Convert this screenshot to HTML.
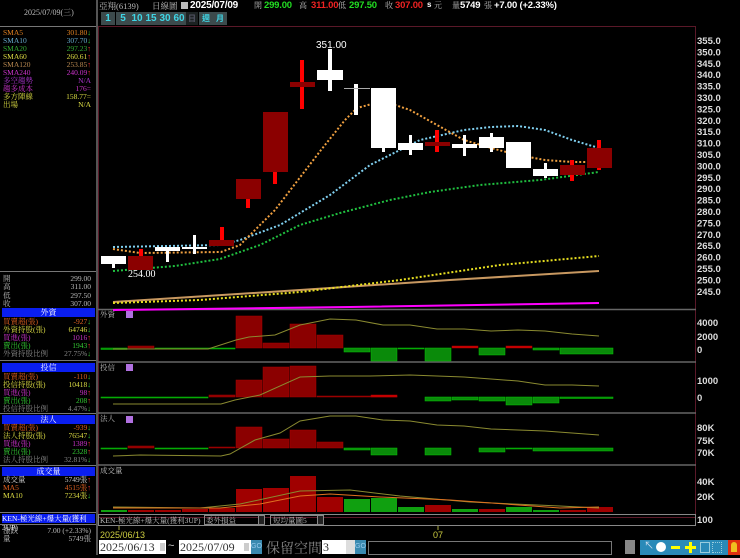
<!DOCTYPE html>
<html><head><meta charset="utf-8"><style>
body{margin:0;width:740px;height:555px;background:#000;overflow:hidden;position:relative;font-family:"Liberation Sans","Noto Sans CJK TC",sans-serif}
.a{position:absolute;white-space:nowrap}
.s{font-family:"Liberation Serif","Noto Serif CJK SC",serif;font-size:8px;line-height:8px}
.b{font-weight:bold;font-size:9.5px;letter-spacing:-0.2px}
.btn{position:absolute;top:12px;height:13px;width:14px;background:#3c4a4c;color:#3fd6e6;font-size:10px;text-align:center;line-height:13px;font-weight:bold}
.hd{position:absolute;left:2px;width:93px;height:9px;background:#0a1ef0;color:#fff;font-size:8px;line-height:9px;text-align:center;font-family:"Liberation Serif","Noto Serif CJK SC",serif}
.r{position:absolute;left:3px;width:88px;font-size:7.5px;line-height:8px;height:8px;overflow:visible;font-family:"Liberation Serif","Noto Serif CJK SC",serif}
.r span{float:right}
.inp{position:absolute;background:#fff;color:#333;font-size:12px;line-height:14px;height:14px;font-family:"Liberation Serif",serif}
</style></head><body>
<div class="a s" style="left:24px;top:9px;color:#bbb">2025/07/09(三)</div>
<div class="a" style="left:0;top:26px;width:96px;height:1px;background:#777"></div>
<div class="a" style="left:96px;top:0;width:2px;height:555px;background:#555"></div>
<div class="r" style="top:29px;color:#e08020">SMA5<span>301.80<b style="color:#3c3">↓</b></span></div>
<div class="r" style="top:37px;color:#6ac">SMA10<span>307.70<b style="color:#3c3">↓</b></span></div>
<div class="r" style="top:45px;color:#3a3">SMA20<span>297.23<b style="color:#e33">↑</b></span></div>
<div class="r" style="top:53px;color:#dd4">SMA60<span>260.61<b style="color:#e33">↑</b></span></div>
<div class="r" style="top:61px;color:#b88850">SMA120<span>253.85<b style="color:#e33">↑</b></span></div>
<div class="r" style="top:69px;color:#c3c">SMA240<span>240.09<b style="color:#e33">↑</b></span></div>
<div class="r" style="top:77px;color:#a3c">多空趨勢<span>N/A</span></div>
<div class="r" style="top:85px;color:#c3c">趨多成本<span>176=</span></div>
<div class="r" style="top:93px;color:#dd4">多方陣線<span>158.77=</span></div>
<div class="r" style="top:101px;color:#dd4">出場<span>N/A</span></div>
<div class="a" style="left:0;top:271px;width:96px;height:1px;background:#777"></div>
<div class="r" style="top:275px;color:#bbb">開<span>299.00</span></div>
<div class="r" style="top:283px;color:#bbb">高<span>311.00</span></div>
<div class="r" style="top:292px;color:#bbb">低<span>297.50</span></div>
<div class="r" style="top:300px;color:#bbb">收<span>307.00</span></div>
<div class="hd" style="top:308px">外資</div>
<div class="r" style="top:318px;color:#e06020">買賣超(張)<span>-927<b style="color:#3c3">↓</b></span></div>
<div class="r" style="top:326px;color:#dd4">外資持股(張)<span>64746<b style="color:#3c3">↓</b></span></div>
<div class="r" style="top:334px;color:#c3c">買進(張)<span>1016<b style="color:#e33">↑</b></span></div>
<div class="r" style="top:342px;color:#3c3">賣出(張)<span>1943<b style="color:#e33">↑</b></span></div>
<div class="r" style="top:350px;color:#888">外資持股比例<span>27.75%<b style="color:#3c3">↓</b></span></div>
<div class="a" style="left:0;top:360px;width:96px;height:1px;background:#777"></div>
<div class="hd" style="top:363px">投信</div>
<div class="r" style="top:373px;color:#e06020">買賣超(張)<span>-110<b style="color:#3c3">↓</b></span></div>
<div class="r" style="top:381px;color:#dd4">投信持股(張)<span>10418<b style="color:#3c3">↓</b></span></div>
<div class="r" style="top:389px;color:#c3c">買進(張)<span>98<b style="color:#e33">↑</b></span></div>
<div class="r" style="top:397px;color:#3c3">賣出(張)<span>208<b style="color:#e33">↑</b></span></div>
<div class="r" style="top:405px;color:#888">投信持股比例<span>4.47%<b style="color:#3c3">↓</b></span></div>
<div class="a" style="left:0;top:413px;width:96px;height:1px;background:#777"></div>
<div class="hd" style="top:415px">法人</div>
<div class="r" style="top:424px;color:#e06020">買賣超(張)<span>-939<b style="color:#3c3">↓</b></span></div>
<div class="r" style="top:432px;color:#dd4">法人持股(張)<span>76547<b style="color:#3c3">↓</b></span></div>
<div class="r" style="top:440px;color:#c3c">買進(張)<span>1389<b style="color:#e33">↑</b></span></div>
<div class="r" style="top:448px;color:#3c3">賣出(張)<span>2328<b style="color:#e33">↑</b></span></div>
<div class="r" style="top:456px;color:#888">法人持股比例<span>32.81%<b style="color:#3c3">↓</b></span></div>
<div class="a" style="left:0;top:465px;width:96px;height:1px;background:#777"></div>
<div class="hd" style="top:467px">成交量</div>
<div class="r" style="top:476px;color:#ccc">成交量<span>5749張<b style="color:#e33">↑</b></span></div>
<div class="r" style="top:484px;color:#e06020">MA5<span>4515張<b style="color:#e33">↑</b></span></div>
<div class="r" style="top:492px;color:#dd4">MA10<span>7234張<b style="color:#3c3">↓</b></span></div>
<div class="a" style="left:0;top:512px;width:96px;height:1px;background:#777"></div>
<div class="hd" style="top:514px;text-align:left;font-size:7.5px">KEN-極光線+爆大量(獲利3UP)</div>
<div class="a" style="left:0;top:524px;width:96px;height:1px;background:#777"></div>
<div class="r" style="top:527px;color:#bbb">漲跌<span>7.00 (+2.33%)</span></div>
<div class="r" style="top:535px;color:#bbb">量<span>5749張</span></div>

<div class="a s" style="left:99px;top:2px;color:#bbb;font-size:8.5px">亞翔(6139)</div>
<div class="a s" style="left:152px;top:2px;color:#bbb;font-size:8.5px">日線圖</div>
<div class="a" style="left:181px;top:2px;width:7px;height:7px;background:#bbb"></div>
<div class="a b" style="left:190px;top:0px;color:#fff;font-size:10px">2025/07/09</div>
<div class="a s" style="left:254px;top:2px;color:#bbb">開</div>
<div class="a b" style="left:264px;top:0;color:#2d2">299.00</div>
<div class="a s" style="left:299px;top:2px;color:#bbb">高</div>
<div class="a b" style="left:311px;top:0;color:#e22">311.00</div>
<div class="a s" style="left:338px;top:2px;color:#bbb">低</div>
<div class="a b" style="left:349px;top:0;color:#2d2">297.50</div>
<div class="a s" style="left:385px;top:2px;color:#bbb">收</div>
<div class="a b" style="left:395px;top:0;color:#e22">307.00</div>
<div class="a b" style="left:427px;top:0;color:#fff;font-size:8px">s</div>
<div class="a s" style="left:434px;top:2px;color:#bbb">元</div>
<div class="a s" style="left:452px;top:2px;color:#bbb">量</div>
<div class="a b" style="left:460px;top:0;color:#fff">5749</div>
<div class="a s" style="left:484px;top:2px;color:#bbb">張</div>
<div class="a b" style="left:494px;top:0;color:#fff">+7.00 (+2.33%)</div>
<div class="btn" style="left:101px">1</div><div class="btn" style="left:116px">5</div><div class="btn" style="left:130px">10</div><div class="btn" style="left:144px">15</div><div class="btn" style="left:158px">30</div><div class="btn" style="left:172px">60</div>
<div class="btn" style="left:186px;width:12px;background:#1c2222;color:#556;font-size:8px">日</div><div class="btn" style="left:199px;font-size:8px">週</div><div class="btn" style="left:213px;font-size:8px">月</div>

<svg class="a" style="left:0;top:0" width="740" height="555">
<rect x="98.5" y="26.5" width="597" height="491" fill="none" stroke="#5a1828" stroke-width="1"/>
<g stroke="#666" stroke-width="1.5"><line x1="98" y1="309.5" x2="696" y2="309.5"/><line x1="98" y1="362" x2="696" y2="362"/><line x1="98" y1="413" x2="696" y2="413"/><line x1="98" y1="465" x2="696" y2="465"/></g>
<rect x="98.5" y="514.5" width="597" height="11" fill="none" stroke="#888"/>
<g font-family="Liberation Sans" font-weight="bold" font-size="9.5" fill="#ddd">
<text x="697" y="44">355.0</text><text x="697" y="55.4">350.0</text><text x="697" y="66.8">345.0</text><text x="697" y="78.2">340.0</text><text x="697" y="89.6">335.0</text><text x="697" y="101">330.0</text><text x="697" y="112.4">325.0</text><text x="697" y="123.8">320.0</text><text x="697" y="135.2">315.0</text><text x="697" y="146.6">310.0</text><text x="697" y="158">305.0</text><text x="697" y="169.4">300.0</text><text x="697" y="180.8">295.0</text><text x="697" y="192.2">290.0</text><text x="697" y="203.6">285.0</text><text x="697" y="215">280.0</text><text x="697" y="226.4">275.0</text><text x="697" y="237.8">270.0</text><text x="697" y="249.2">265.0</text><text x="697" y="260.6">260.0</text><text x="697" y="272">255.0</text><text x="697" y="283.4">250.0</text><text x="697" y="294.8">245.0</text>
<text x="697" y="326">4000</text><text x="697" y="340">2000</text><text x="697" y="353">0</text>
<text x="697" y="384">1000</text><text x="697" y="401">0</text>
<text x="697" y="431">80K</text><text x="697" y="444">75K</text><text x="697" y="456">70K</text>
<text x="697" y="485">40K</text><text x="697" y="500">20K</text><text x="697" y="523">100</text>
</g>
<polyline fill="none" stroke="#ff00ff" stroke-width="2" points="113,310 350,307 599,303"/>
<polyline fill="none" stroke="#c89860" stroke-width="2" points="113,302 300,290 450,280 599,271"/>
<polyline fill="none" stroke="#e8e020" stroke-width="2" stroke-dasharray="2,2" points="113,303 200,300 300,292 400,280 500,265 599,256"/>
<polyline fill="none" stroke="#20c040" stroke-width="2" stroke-dasharray="2,2" points="113,271 175,266 220,259 260,245 300,225 340,213 390,200 430,192 480,185 540,180 599,172"/>
<polyline fill="none" stroke="#80d0f0" stroke-width="2" stroke-dasharray="2,2" points="113,247 221,245 240,240 280,225 330,195 370,165 420,140 464,130 491,127 518,126 545,130 572,140 599,148"/>
<polyline fill="none" stroke="#f0a040" stroke-width="2" stroke-dasharray="2,2" points="113,249 140,253 221,252 240,245 275,210 321,150 345,120 357,108 383,101 410,110 437,125 464,140 491,148 518,155 545,160 572,162 599,162"/>
<g fill="#f00">
<rect x="139" y="249" width="4" height="8"/><rect x="220" y="227" width="4" height="13"/><rect x="246" y="199" width="4" height="9"/><rect x="273" y="172" width="4" height="12"/><rect x="300" y="60" width="4" height="49"/><rect x="435" y="130" width="4" height="22"/><rect x="570" y="160" width="4" height="21"/><rect x="597" y="140" width="4" height="30"/>
</g>
<g fill="#8b0000">
<rect x="128" y="256" width="25" height="14"/><rect x="209" y="240" width="25" height="6"/><rect x="236" y="179" width="25" height="20"/><rect x="263" y="112" width="25" height="60"/><rect x="290" y="82" width="25" height="5"/><rect x="425" y="142" width="25" height="4"/><rect x="560" y="165" width="25" height="10"/><rect x="587" y="148" width="25" height="20"/>
</g>
<g fill="#fff">
<rect x="112" y="256" width="3" height="12"/><rect x="101" y="256" width="25" height="8"/>
<rect x="166" y="247" width="3" height="15"/><rect x="155" y="247" width="25" height="4"/>
<rect x="193" y="235" width="3" height="19"/><rect x="182" y="247" width="25" height="2"/>
<rect x="328" y="49" width="4" height="42"/><rect x="317" y="70" width="26" height="10"/>
<rect x="354" y="84" width="4" height="31"/><rect x="344" y="88" width="26" height="1" fill="#aaa"/>
<rect x="371" y="88" width="25" height="60"/><rect x="382" y="148" width="3" height="4"/>
<rect x="409" y="135" width="3" height="20"/><rect x="398" y="143" width="25" height="7"/>
<rect x="463" y="135" width="3" height="21"/><rect x="452" y="144" width="25" height="4"/>
<rect x="490" y="133" width="3" height="19"/><rect x="479" y="137" width="25" height="11"/>
<rect x="506" y="142" width="25" height="26"/>
<rect x="544" y="163" width="3" height="15"/><rect x="533" y="169" width="25" height="7"/>
</g>
<text x="316" y="48" font-family="Liberation Sans" font-size="10" fill="#fff">351.00</text>
<text x="128" y="277" font-family="Liberation Serif" font-size="10" fill="#fff">254.00</text>
<g font-family="Liberation Serif,Noto Serif CJK SC" font-size="7.5" fill="#bbb"><text x="100" y="317">外資</text><text x="100" y="370">投信</text><text x="100" y="421">法人</text><text x="100" y="473">成交量</text></g>
<g fill="#b070e0"><rect x="126" y="311" width="7" height="7"/><rect x="126" y="364" width="7" height="7"/><rect x="126" y="416" width="7" height="7"/></g>
<g fill="#8b0000" stroke="#a00" stroke-width=".5">
<rect x="128" y="346" width="26" height="2"/><rect x="236" y="316" width="26" height="32"/><rect x="263" y="343" width="26" height="5"/><rect x="290" y="324" width="26" height="24"/><rect x="317" y="335" width="26" height="13"/><rect x="452" y="346" width="26" height="2" fill="#c00"/><rect x="506" y="346" width="26" height="2" fill="#c00"/>
</g>
<g fill="#0a8a0a" stroke="#0c0" stroke-width=".5">
<rect x="101" y="348" width="26" height="1.5"/><rect x="155" y="348" width="80" height="1"/><rect x="344" y="348" width="26" height="4"/><rect x="371" y="348" width="26" height="13"/><rect x="398" y="348" width="26" height="1"/><rect x="425" y="348" width="26" height="13"/><rect x="479" y="348" width="26" height="7"/><rect x="533" y="348" width="26" height="2"/><rect x="560" y="348" width="53" height="6"/>
</g>
<polyline fill="none" stroke="#8a8a30" points="113,349 208,349 236,340 249,337 275,335 300,325 330,319 356,320 383,325 410,325 437,329 464,329 491,331 518,330 545,331 572,334 599,336"/>
<g fill="#8b0000" stroke="#a00" stroke-width=".5">
<rect x="209" y="395" width="26" height="2"/><rect x="236" y="380" width="26" height="17"/><rect x="263" y="367" width="26" height="30"/><rect x="290" y="366" width="26" height="31"/><rect x="317" y="396" width="80" height="1"/><rect x="371" y="395" width="26" height="2" fill="#c00"/>
</g>
<g fill="#0a8a0a" stroke="#0c0" stroke-width=".5">
<rect x="101" y="397" width="107" height="1"/><rect x="425" y="397" width="26" height="4"/><rect x="452" y="397" width="26" height="3"/><rect x="479" y="397" width="26" height="4"/><rect x="506" y="397" width="26" height="8"/><rect x="533" y="397" width="26" height="6"/><rect x="560" y="397" width="53" height="1.5"/>
</g>
<polyline fill="none" stroke="#8a8a30" points="113,404 221,404 235,400 260,395 300,377 330,376 370,376 410,375 437,376 464,377 491,379 518,381 545,385 572,385 599,386"/>
<g fill="#8b0000" stroke="#a00" stroke-width=".5">
<rect x="128" y="446" width="26" height="2"/><rect x="209" y="447" width="26" height="1"/><rect x="236" y="427" width="26" height="21"/><rect x="263" y="439" width="26" height="9"/><rect x="290" y="430" width="26" height="18"/><rect x="317" y="442" width="26" height="6"/>
</g>
<g fill="#0a8a0a" stroke="#0c0" stroke-width=".5">
<rect x="101" y="448" width="26" height="1"/><rect x="155" y="448" width="53" height="1"/><rect x="344" y="448" width="26" height="2"/><rect x="371" y="448" width="26" height="7"/><rect x="425" y="448" width="26" height="7"/><rect x="479" y="448" width="26" height="4"/><rect x="506" y="448" width="26" height="1"/><rect x="533" y="448" width="80" height="3"/>
</g>
<polyline fill="none" stroke="#8a8a30" points="113,456 140,455 221,456 230,454 255,440 280,433 300,421 330,416 356,416 383,420 410,421 437,425 464,426 491,429 518,430 545,431 572,433 599,435"/>
<g fill="#a00000">
<rect x="128" y="510" width="26" height="2"/><rect x="155" y="510" width="26" height="2"/><rect x="182" y="509" width="26" height="3"/><rect x="209" y="508" width="26" height="4"/><rect x="236" y="489" width="26" height="23"/><rect x="263" y="488" width="26" height="24"/><rect x="290" y="476" width="26" height="36"/><rect x="317" y="497" width="26" height="15"/><rect x="425" y="505" width="26" height="7"/><rect x="479" y="509" width="26" height="3"/><rect x="560" y="510" width="26" height="2"/><rect x="587" y="507" width="26" height="5"/>
</g>
<g fill="#10a010">
<rect x="101" y="510" width="26" height="2"/><rect x="344" y="499" width="26" height="13"/><rect x="371" y="498" width="26" height="14"/><rect x="398" y="507" width="26" height="5"/><rect x="452" y="509" width="26" height="3"/><rect x="506" y="507" width="26" height="5"/><rect x="533" y="510" width="26" height="2"/>
</g>
<polyline fill="none" stroke="#8a8a30" points="113,507 200,508 240,504 300,491 350,490 400,496 470,502 560,506 599,508"/>
<polyline fill="none" stroke="#e07020" points="113,508 220,508 260,504 300,496 330,494 380,497 450,500 560,508 599,507"/>
<g font-family="Liberation Serif,Noto Serif CJK SC" font-size="7.5" fill="#bbb"><text x="100" y="523">KEN-極光線+爆大量(獲利3UP)</text>
<rect x="204.5" y="515.5" width="60" height="9" fill="none" stroke="#888"/><text x="206" y="523">委外損益</text><rect x="258.5" y="515.5" width="6" height="9" fill="#222" stroke="#888"/>
<rect x="270.5" y="515.5" width="53" height="9" fill="none" stroke="#888"/><text x="273" y="523">短均量圖5</text><rect x="317.5" y="515.5" width="6" height="9" fill="#222" stroke="#888"/></g>
<line x1="119" y1="526" x2="119" y2="530" stroke="#aa4"/><line x1="438" y1="526" x2="438" y2="530" stroke="#aa4"/>
<g font-family="Liberation Sans" font-size="9" fill="#cccc40"><text x="100" y="538">2025/06/13</text><text x="433" y="538">07</text></g>
</svg>
<div class="inp" style="left:99px;top:540px;width:66px;padding-left:1px">2025/06/13</div>
<div class="a" style="left:160px;top:543px;width:5px;height:8px;background:#ccc"></div>
<div class="a" style="left:168px;top:540px;color:#ccc;font-size:11px">~</div>
<div class="inp" style="left:179px;top:540px;width:71px;padding-left:1px">2025/07/09</div>
<div class="a" style="left:244px;top:543px;width:5px;height:8px;background:#ccc"></div>
<div class="a" style="left:251px;top:540px;width:11px;height:14px;background:#3a8ab0;color:#9ce;font-size:7px;line-height:14px">GO</div>
<div class="a" style="left:266px;top:538px;color:#888;font-size:14px;font-family:'Liberation Serif','Noto Serif CJK SC',serif">保留空間</div>
<div class="inp" style="left:322px;top:540px;width:24px;padding-left:1px">3</div>
<div class="a" style="left:346px;top:540px;width:9px;height:14px;background:#ddd"></div>
<div class="a" style="left:355px;top:540px;width:11px;height:14px;background:#3a8ab0;color:#9ce;font-size:7px;line-height:14px">GO</div>
<div class="a" style="left:368px;top:541px;width:242px;height:12px;background:#000;border:1px solid #777"></div>
<div class="a" style="left:625px;top:540px;width:10px;height:14px;background:#888"></div>
<div class="a" style="left:640px;top:540px;width:100px;height:15px;background:#2a8ab8"></div>
<div class="a" style="left:644px;top:542px;color:#cde;font-size:10px;line-height:10px">↖</div>
<div class="a" style="left:656px;top:542px;width:10px;height:10px;border-radius:50%;background:#fff"></div>
<div class="a" style="left:671px;top:546px;width:9px;height:3px;background:#ff0"></div>
<div class="a" style="left:685px;top:546px;width:11px;height:3px;background:#ff0"></div><div class="a" style="left:689px;top:542px;width:3px;height:11px;background:#ff0"></div>
<div class="a" style="left:700px;top:542px;width:8px;height:9px;border:1px solid #9cd"></div>
<div class="a" style="left:712px;top:542px;width:8px;height:9px;border:1px dotted #9cd"></div>
<div class="a" style="left:728px;top:540px;width:12px;height:15px;background:#e03010"></div>
<div class="a" style="left:731px;top:542px;width:6px;height:10px;background:#f0c020;border-radius:3px 3px 0 0"></div>
</body></html>
